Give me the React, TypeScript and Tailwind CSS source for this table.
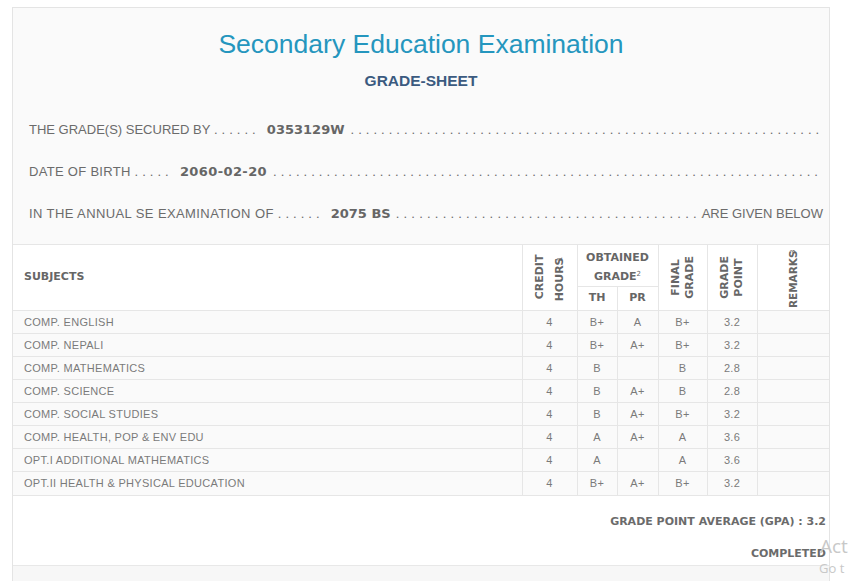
import React from "react";

const rows = [
  ["COMP. ENGLISH", "4", "B+", "A", "B+", "3.2"],
  ["COMP. NEPALI", "4", "B+", "A+", "B+", "3.2"],
  ["COMP. MATHEMATICS", "4", "B", "", "B", "2.8"],
  ["COMP. SCIENCE", "4", "B", "A+", "B", "2.8"],
  ["COMP. SOCIAL STUDIES", "4", "B", "A+", "B+", "3.2"],
  ["COMP. HEALTH, POP & ENV EDU", "4", "A", "A+", "A", "3.6"],
  ["OPT.I ADDITIONAL MATHEMATICS", "4", "A", "", "A", "3.6"],
  ["OPT.II HEALTH & PHYSICAL EDUCATION", "4", "B+", "A+", "B+", "3.2"],
];

function Dots({ n, grow, right }: { n: number; grow?: boolean; right?: boolean }) {
  return (
    <span
      className={
        grow
          ? "flex-1 min-w-0 overflow-hidden whitespace-nowrap " +
            (right ? "text-right tracking-[0.3px]" : "text-left tracking-[0.2px]")
          : "whitespace-nowrap tracking-[0.2px]"
      }
    >
      {". ".repeat(n).trimEnd()}
    </span>
  );
}

const bold = { fontFamily: '"DejaVu Sans", Verdana, sans-serif' };

function VHead({ children, leading }: { children: React.ReactNode; leading: string }) {
  return (
    <div className={"inline-block align-middle [writing-mode:vertical-rl] rotate-180 text-center " + leading}>
      {children}
    </div>
  );
}

export default function App() {
  const font = { fontFamily: '"Liberation Sans", Arial, sans-serif' };
  return (
    <div className="relative w-[849px] h-[581px] overflow-hidden bg-white" style={font}>
      <div className="ml-[12px] mt-[7px] w-[818px] border border-[#e4e4e4] bg-[#fafafa]">
        <div className="pt-[20px] text-center">
          <div className="text-[26.5px] leading-[32px] text-[#2596be]">Secondary Education Examination</div>
          <div className="mt-[11px] text-[15.5px] leading-[20px] font-bold text-[#3b5a80]">GRADE-SHEET</div>
        </div>
        <div className="mt-[18px] mb-[9px] pl-[16px] pr-[6px] text-[13px] text-[#6b6b6b]">
          <div className="h-[42px] flex items-center whitespace-nowrap">
            <span>THE GRADE(S) SECURED BY&nbsp;</span>
            <Dots n={6} />
            <span className="font-bold ml-[11px] mr-[6px] text-[#666]" style={bold}>0353129W</span>
            <Dots n={62} grow />
          </div>
          <div className="h-[42px] flex items-center whitespace-nowrap">
            <span className="tracking-[0.3px]">DATE OF BIRTH&nbsp;</span>
            <Dots n={5} />
            <span className="font-bold ml-[11px] mr-[6px] text-[#666] tracking-[0.4px]" style={bold}>2060-02-20</span>
            <Dots n={72} grow />
          </div>
          <div className="h-[42px] flex items-center whitespace-nowrap">
            <span className="tracking-[0.4px]">IN THE ANNUAL SE EXAMINATION OF&nbsp;</span>
            <Dots n={6} />
            <span className="font-bold ml-[11px] mr-[5px] text-[#666]" style={bold}>2075 BS</span>
            <Dots n={40} grow right />
            <span>ARE GIVEN BELOW</span>
          </div>
        </div>
        <table className="w-full table-fixed border-collapse text-[11px] text-[#7a7a7a]">
          <colgroup>
            <col className="w-[509px]" />
            <col className="w-[55px]" />
            <col className="w-[40px]" />
            <col className="w-[41px]" />
            <col className="w-[49px]" />
            <col className="w-[50px]" />
            <col />
          </colgroup>
          <thead className="bg-white text-[#666] font-bold text-[11px]" style={bold}>
            <tr className="h-[42px] border-t border-[#e6e6e6]">
              <th rowSpan={2} className="text-left pl-[11px] align-middle">SUBJECTS</th>
              <th rowSpan={2} className="border-l border-[#e6e6e6] align-middle text-center">
                <VHead leading="leading-[20px]">
                  CREDIT<br />HOURS<sup className="text-[7px] font-normal leading-none">1</sup>
                </VHead>
              </th>
              <th colSpan={2} className="border-l border-[#e6e6e6] leading-[19px] pt-[2px]">
                OBTAINED<br />GRADE<sup className="text-[7px] font-normal leading-none">2</sup>
              </th>
              <th rowSpan={2} className="border-l border-[#e6e6e6] align-middle text-center">
                <VHead leading="leading-[14px]">
                  FINAL<br />GRADE
                </VHead>
              </th>
              <th rowSpan={2} className="border-l border-[#e6e6e6] align-middle text-center">
                <VHead leading="leading-[14px]">
                  GRADE<br />POINT
                </VHead>
              </th>
              <th rowSpan={2} className="border-l border-[#e6e6e6] align-middle text-center">
                <VHead leading="leading-[14px] text-[10.5px]">
                  REMARKS<sup className="text-[7px] font-normal leading-none">3</sup>
                </VHead>
              </th>
            </tr>
            <tr className="h-[24px]">
              <th className="border-l border-t border-[#e6e6e6]">TH</th>
              <th className="border-l border-t border-[#e6e6e6]">PR</th>
            </tr>
          </thead>
          <tbody className="bg-[#fafafa] tracking-[0.3px]">
            {rows.map((r) => (
              <tr key={r[0]} className="h-[23px] border-t border-[#e6e6e6]">
                <td className="pl-[11px] whitespace-nowrap">{r[0]}</td>
                <td className="text-center border-l border-[#e6e6e6]">{r[1]}</td>
                <td className="text-center border-l border-[#e6e6e6]">{r[2]}</td>
                <td className="text-center border-l border-[#e6e6e6]">{r[3]}</td>
                <td className="text-center border-l border-[#e6e6e6]">{r[4]}</td>
                <td className="text-center border-l border-[#e6e6e6]">{r[5]}</td>
                <td className="border-l border-[#e6e6e6]"></td>
              </tr>
            ))}
          </tbody>
        </table>
        <div
          className="bg-white border-t border-[#e6e6e6] pt-[18px] pb-[3px] pr-[3px] text-right text-[11px] font-bold text-[#6b6b6b]"
          style={bold}
        >
          <div className="leading-[16px]">GRADE POINT AVERAGE (GPA) : 3.2</div>
          <div className="mt-[16px] leading-[16px]">COMPLETED</div>
        </div>
        <div className="h-[30px] border-t border-[#e8e8e8] bg-[#f7f7f7]"></div>
      </div>
      <div
        className="absolute left-[820px] top-[535px] text-[19px] leading-[22px] text-[#c8c8c8] whitespace-nowrap"
        style={{ fontFamily: '"Open Sans", sans-serif' }}
      >
        Act
      </div>
      <div
        className="absolute left-[819px] top-[559px] text-[13px] leading-[18px] text-[#c8c8c8] whitespace-nowrap"
        style={{ fontFamily: '"Open Sans", sans-serif' }}
      >
        Go t
      </div>
    </div>
  );
}
